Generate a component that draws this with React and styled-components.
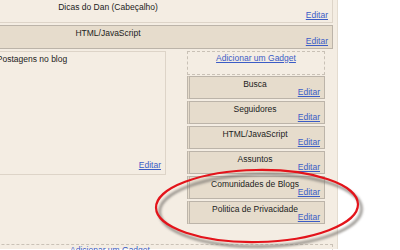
import React from "react";
import styled, { createGlobalStyle } from "styled-components";

const GlobalStyle = createGlobalStyle`
  html, body {
    margin: 0;
    padding: 0;
    background: #ffffff;
  }
  body {
    font-family: "Liberation Sans", Arial, sans-serif;
  }
`;

const Screen = styled.div`
  position: relative;
  width: 400px;
  height: 250px;
  overflow: hidden;
  background: #ffffff;
`;

const Layout = styled.div`
  box-sizing: border-box;
  width: 454px;
  height: 250px;
  margin-left: -116px;
  padding: 0 4px 0 3px;
  background: #f4ede3;
  border-right: 1px solid #e4dcd0;
  font-size: 8.5px;
  color: #1c1c1c;
`;

const Widget = styled.div`
  box-sizing: border-box;
  height: ${(p) => p.$height || 23}px;
  margin-top: ${(p) => p.$top || 0}px;
  padding: 3px 4px 0 0;
  background: ${(p) => (p.$plain ? "#f4ede3" : "#e6dccc")};
  border: 1px solid ${(p) => (p.$plain ? "#ddd4c8" : "#bcb4a9")};
  border-left: ${(p) => (p.$handle ? "3px double #bdb5aa" : undefined)};
`;

const WidgetTitle = styled.div`
  line-height: 9px;
  text-align: center;
  white-space: nowrap;
`;

const EditRow = styled.div`
  line-height: 9px;
  margin-top: -1px;
  text-align: right;
`;

const Link = styled.a`
  color: #3b5cc6;
  text-decoration: underline;
  cursor: pointer;
`;

const Columns = styled.div`
  display: flex;
  align-items: flex-start;
  margin-top: 2px;
`;

const MainBox = styled.div`
  box-sizing: border-box;
  width: 279px;
  height: 124px;
  display: flex;
  flex-direction: column;
  justify-content: space-between;
  padding: 3px 4px 4px 15px;
  border: 1px solid #ddd4c8;
`;

const Sidebar = styled.div`
  width: 138px;
  margin-left: 21px;
  display: flex;
  flex-direction: column;
  gap: 2px;
`;

const AddGadget = styled.div`
  box-sizing: border-box;
  height: ${(p) => p.$height || 24}px;
  margin-top: ${(p) => p.$top || 0}px;
  margin-bottom: ${(p) => p.$bottom || 0}px;
  padding-top: ${(p) => p.$pad || 2}px;
  border: 1px dashed #c9c1b6;
  line-height: 9px;
  text-align: center;
`;

const Marker = styled.svg`
  position: absolute;
  left: 140px;
  top: 160px;
  overflow: visible;
`;

const gadgets = [
  "Busca",
  "Seguidores",
  "HTML/JavaScript",
  "Assuntos",
  "Comunidades de Blogs",
  "Politica de Privacidade",
];

const Gadget = ({ title, ...rest }) => (
  <Widget {...rest}>
    <WidgetTitle>{title}</WidgetTitle>
    <EditRow>
      <Link>Editar</Link>
    </EditRow>
  </Widget>
);

export default function App() {
  return (
    <Screen>
      <GlobalStyle />
      <Layout>
        <Gadget title="Dicas do Dan (Cabeçalho)" $plain $height={24} $top={-1} />
        <Gadget title="HTML/JavaScript" $height={24} $top={2} />
        <Columns>
          <MainBox>
            <WidgetTitle>Postagens no blog</WidgetTitle>
            <EditRow>
              <Link>Editar</Link>
            </EditRow>
          </MainBox>
          <Sidebar>
            <AddGadget $bottom={-1}>
              <Link>Adicionar um Gadget</Link>
            </AddGadget>
            {gadgets.map((g) => (
              <Gadget key={g} title={g} $handle />
            ))}
          </Sidebar>
        </Columns>
        <AddGadget $top={20} $height={30} $pad={1}>
          <Link>Adicionar um Gadget</Link>
        </AddGadget>
      </Layout>
      <Marker width="230" height="95" viewBox="0 0 230 95">
        <defs>
          <filter id="blur" x="-10%" y="-20%" width="120%" height="140%">
            <feGaussianBlur stdDeviation="1.2" />
          </filter>
        </defs>
        <ellipse
          cx="119"
          cy="48"
          rx="101"
          ry="36"
          fill="none"
          stroke="#7f7a75"
          strokeWidth="2.8"
          opacity="0.75"
          filter="url(#blur)"
          transform="rotate(-1 117 46) translate(1.5 2.5)"
        />
        <ellipse
          cx="117"
          cy="46"
          rx="101"
          ry="36"
          fill="none"
          stroke="#e3141b"
          strokeWidth="2.2"
          transform="rotate(-1 117 46)"
        />
      </Marker>
    </Screen>
  );
}
